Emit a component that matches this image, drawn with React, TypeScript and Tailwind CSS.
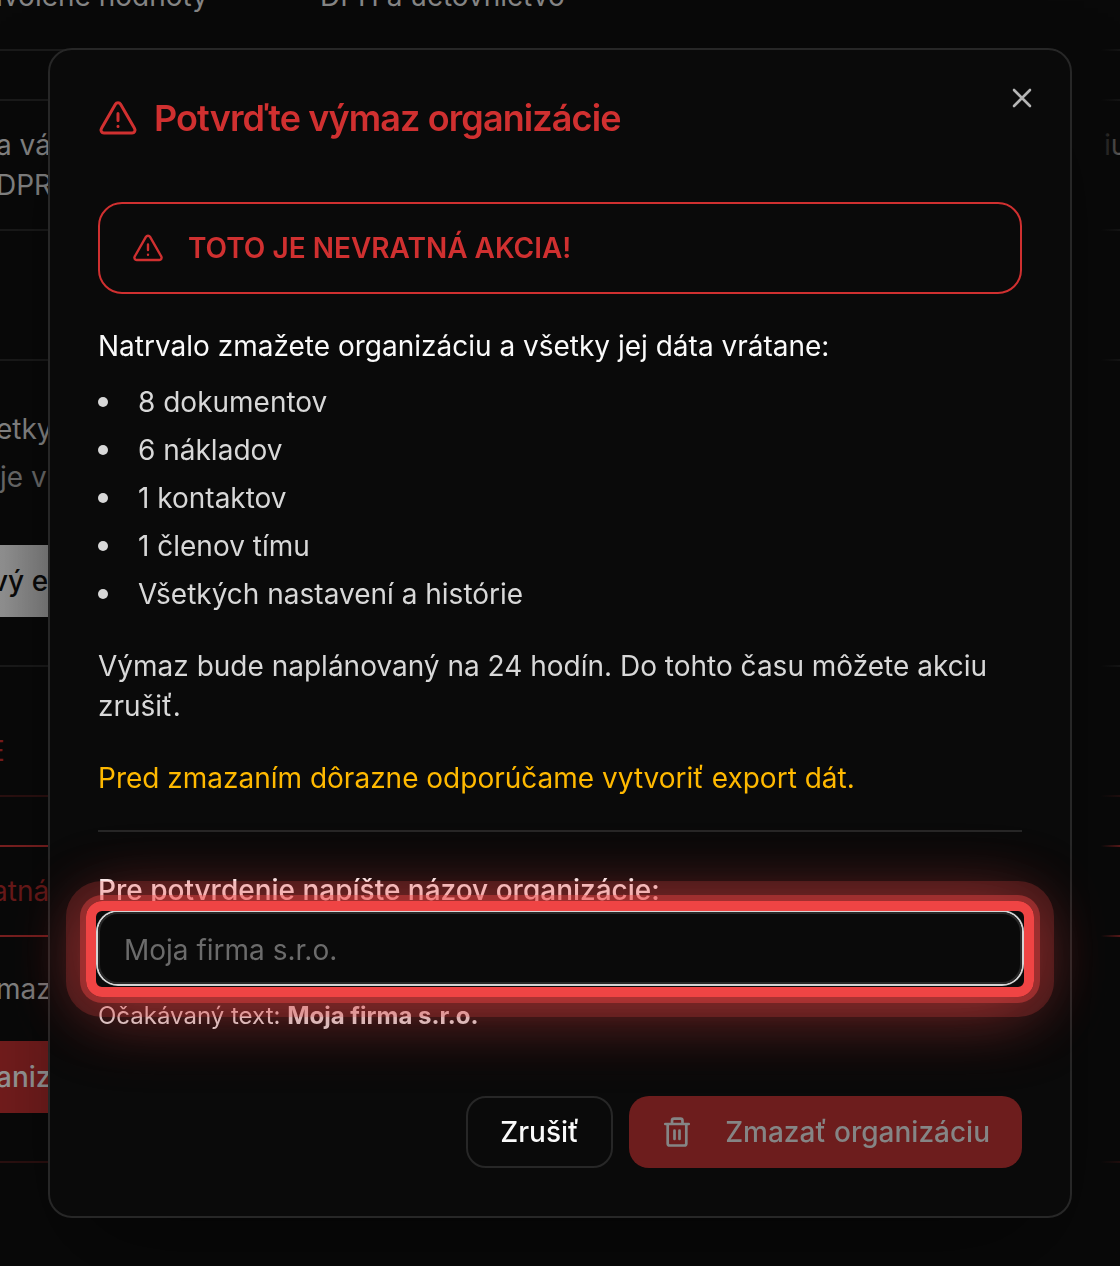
import type { ReactNode } from "react"

const DELETED_ITEMS = [
	"8 dokumentov",
	"6 nákladov",
	"1 kontaktov",
	"1 členov tímu",
	"Všetkých nastavení a histórie",
]

type IconProps = { className?: string }

const WarningIcon = ({ className }: IconProps) => (
	<svg
		className={className}
		viewBox="0 0 40 40"
		fill="none"
		stroke="currentColor"
		strokeWidth="3"
		strokeLinecap="round"
		strokeLinejoin="round"
		aria-hidden
	>
		<path d="M17.4 6.2 3.4 30.600a2.900 2.900 0 0 0 2.500 4.400h28.200a2.900 2.900 0 0 0 2.500-4.400L22.600 6.200a3 3 0 0 0-5.200 0Z" />
		<path d="M20 15.500v7M20 28.300v.2" />
	</svg>
)

const TrashIcon = ({ className }: IconProps) => (
	<svg
		className={className}
		viewBox="0 0 32 32"
		fill="none"
		stroke="currentColor"
		strokeWidth="2.700"
		strokeLinecap="round"
		strokeLinejoin="round"
		aria-hidden
	>
		<path d="M4.300 8h23.400M6.700 8v19.500a2 2 0 0 0 2 2h14.600a2 2 0 0 0 2-2V8M11 8V4.700a2 2 0 0 1 2-2h6.500a2 2 0 0 1 2 2V8M13.500 14.500v8.500M18.500 14.500v8.500" />
	</svg>
)

const CloseIcon = ({ className }: IconProps) => (
	<svg
		className={className}
		viewBox="0 0 20 20"
		fill="none"
		stroke="currentColor"
		strokeWidth="2.6"
		strokeLinecap="round"
		aria-hidden
	>
		<path d="m2 2 16 16M18 2 2 18" />
	</svg>
)

const Section = ({ className, children }: { className: string; children?: ReactNode }) => (
	<section className={`overflow-hidden whitespace-nowrap border-t-2 ${className}`}>
		{children}
	</section>
)

// Settings page that stays visible around the dialog
const SettingsPage = () => (
	<main className="relative h-full overflow-hidden text-[28px] leading-10 text-[#858585]">
		<div className="-mt-6 flex h-[73px] gap-28 overflow-hidden whitespace-nowrap">
			<div className="flex w-52 justify-end">Predvolené hodnoty</div>
			<div>DPH a účtovníctvo</div>
		</div>
		<Section className="h-[50px] border-[#1a1a1a]" />
		<Section className="flex h-[130px] justify-between border-[#1a1a1a] pt-6">
			<p className="-ml-1">
				a vášho
				<br />
				DPR
			</p>
			<p className="w-4">iu</p>
		</Section>
		<Section className="h-[130px] border-[#1a1a1a]" />
		<Section className="h-[306px] border-[#1a1a1a] pt-12">
			<p className="-ml-1">etky</p>
			<p className="pt-2 text-[#6a6a6a]">je v</p>
			<button className="mt-12 h-[72px] w-40 bg-linear-to-r from-[#949494] to-[#606060] text-left -indent-2 font-medium text-[#0a0a0a]">
				vý export
			</button>
		</Section>
		<Section className="h-[130px] border-[#1a1a1a] pt-16 text-[#791d1d]">
			<p className="-ml-3">E</p>
		</Section>
		<Section className="h-[366px] border-[#2b1010] pt-12">
			<div className="h-[92px] border-y-2 border-[#7c2020] pt-6 text-[#6c1a1a]">
				<p className="-ml-2">atná</p>
			</div>
			<p className="-ml-1 pt-8">maz</p>
			<button className="mt-8 h-[72px] w-40 bg-[#741d1d] text-left -indent-1 font-medium text-[#999]">
				anizáciu
			</button>
		</Section>
		<Section className="h-32 border-[#2b1010]" />
		<div className="absolute inset-y-0 right-0 w-16 bg-linear-to-r from-[#090909] from-70% to-[#090909]/30" />
	</main>
)

const DeleteDialog = () => (
	<div
		role="dialog"
		aria-labelledby="dialog-title"
		className="relative w-full max-w-5xl rounded-3xl border-2 border-[#272727] bg-[#0a0a0a] p-12 shadow-[0_50px_100px_-24px_rgba(0,0,0,0.5)]"
	>
		<header className="flex items-center gap-4 text-[#d03030]">
			<WarningIcon className="size-10 shrink-0" />
			<h2 id="dialog-title" className="text-4xl font-semibold tracking-tight">
				Potvrďte výmaz organizácie
			</h2>
		</header>
		<button aria-label="Zavrieť" className="absolute top-9 right-9 p-0.5 text-[#b5b5b5]">
			<CloseIcon className="size-5" />
		</button>

		<div
			role="alert"
			className="mt-16 flex items-center gap-6 rounded-3xl border-2 border-[#d03030] px-8 py-6 font-semibold text-[#d03030]"
		>
			<WarningIcon className="size-8 shrink-0" />
			TOTO JE NEVRATNÁ AKCIA!
		</div>

		<p className="mt-8 text-[#fafafa]">Natrvalo zmažete organizáciu a všetky jej dáta vrátane:</p>
		<ul className="mt-4 flex flex-col gap-2">
			{DELETED_ITEMS.map(item => (
				<li key={item} className="flex items-center gap-[30px]">
					<span className="size-2.5 rounded-full bg-[#d8d8d8]" />
					{item}
				</li>
			))}
		</ul>
		<p className="mt-8">
			Výmaz bude naplánovaný na 24 hodín. Do tohto času môžete akciu zrušiť.
		</p>
		<p className="mt-8 text-[#ffb900]">Pred zmazaním dôrazne odporúčame vytvoriť export dát.</p>

		<div className="mt-8 flex flex-col border-t-2 border-[#272727] pt-10">
			<label htmlFor="organization" className="mb-1 leading-9 font-medium text-[#fafafa]">
				Pre potvrdenie napíšte názov organizácie:
			</label>
			<div className="relative">
				<input
					id="organization"
					placeholder="Moja firma s.r.o."
					className="block h-[72px] w-full rounded-[20px] border-2 border-[#272727] px-6 pt-1 ring-2 ring-[#d4d4d4] outline-none placeholder:text-[#6b6b6b]"
				/>
				{/* Highlight around the required field */}
				<div className="pointer-events-none absolute -inset-x-3 -top-[11px] -bottom-[13px] rounded-2xl border-10 border-[#ef4444] shadow-[0_0_0_6px_rgba(239,68,68,0.42),0_0_0_20px_rgba(239,68,68,0.22),0_0_70px_rgba(239,68,68,0.35),0_16px_72px_rgba(239,68,68,0.35)]" />
			</div>
			<p className="mt-4 text-2xl">
				Očakávaný text: <strong>Moja firma s.r.o.</strong>
			</p>
		</div>

		<footer className="mt-16 flex justify-end gap-4 font-medium">
			<button className="h-[72px] rounded-[20px] border-2 border-[#272727] px-8 text-[#fafafa]">
				Zrušiť
			</button>
			<button
				disabled
				className="flex h-[72px] items-center gap-8 rounded-[20px] bg-[#6d1d1d] px-8 text-[#858585]"
			>
				<TrashIcon className="size-8" />
				Zmazať organizáciu
			</button>
		</footer>
	</div>
)

export default function App() {
	return (
		<div className="h-screen bg-[#090909] font-['Inter',sans-serif]">
			<SettingsPage />
			<div className="fixed inset-0 flex items-center justify-center p-12 text-[28px] leading-10 text-[#d8d8d8]">
				<DeleteDialog />
			</div>
		</div>
	)
}
